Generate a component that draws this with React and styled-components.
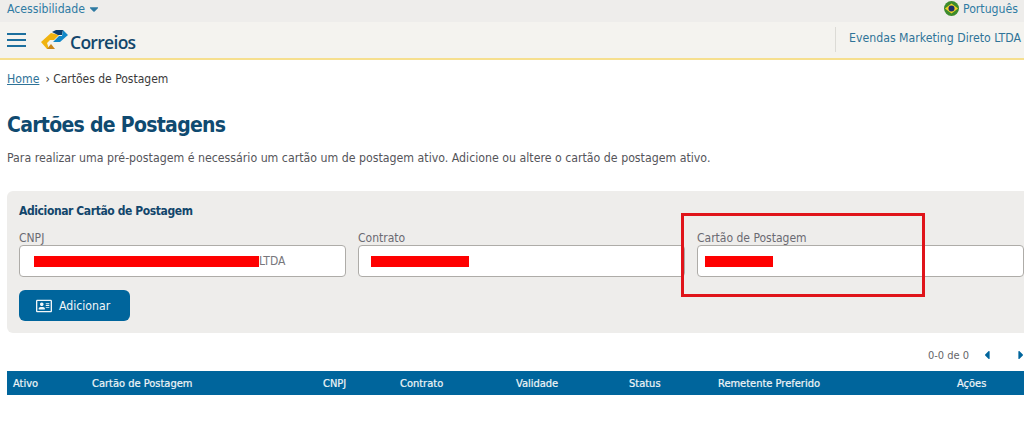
import React from "react";
import styled, { createGlobalStyle } from "styled-components";
import { FaCaretDown, FaCaretLeft, FaCaretRight, FaRegAddressCard } from "react-icons/fa";

const GlobalStyle = createGlobalStyle`
  html, body {
    margin: 0;
    padding: 0;
    background: #fff;
    overflow: hidden;
  }
  body {
    font-family: "DejaVu Sans", Verdana, sans-serif;
    font-stretch: condensed;
    color: #3a3a3a;
  }
`;

const Page = styled.div`
  position: relative;
  width: 1024px;
  height: 431px;
  overflow: hidden;
`;

const TopBar = styled.div`
  height: 22px;
  background: #eeedeb;
  display: flex;
  align-items: center;
  justify-content: space-between;
  padding: 0 6px 5px 7px;
  box-sizing: border-box;
  font-size: 12.2px;
  color: #2f7ba3;
`;

const TopLink = styled.div`
  display: flex;
  align-items: center;
  gap: ${(p) => p.$gap}px;
`;

const NavBar = styled.div`
  height: 38px;
  box-sizing: border-box;
  background: #f4f3ef;
  border-bottom: 2px solid #f6df8e;
  display: flex;
  align-items: center;
  padding-left: 7px;
`;

const Burger = styled.div`
  width: 19px;
  display: flex;
  flex-direction: column;
  gap: 4px;
  margin-right: 14px;
  span {
    display: block;
    height: 2px;
    background: #1c6f9e;
  }
`;

const Logo = styled.div`
  display: flex;
  align-items: center;
  gap: 0;
`;

const LogoWord = styled.span`
  font-family: "Open Sans", sans-serif;
  font-stretch: normal;
  font-size: 17.5px;
  font-weight: 600;
  letter-spacing: -0.7px;
  color: #12466b;
  margin-top: 4px;
`;

const UserBox = styled.div`
  margin-left: auto;
  height: 25px;
  margin-top: -2px;
  padding: 0 3px 0 13px;
  box-sizing: border-box;
  border-left: 1px solid #dcdbd6;
  font-size: 12.2px;
  line-height: 22px;
  color: #2f7398;
`;

const Content = styled.main`
  padding: 0 0 0 7px;
`;

const Breadcrumb = styled.div`
  display: flex;
  align-items: center;
  gap: 6px;
  height: 16px;
  margin-top: 11px;
  font-size: 12px;
  a {
    color: #2f7398;
    text-decoration: underline;
    font-size: 12.2px;
  }
`;

const Title = styled.h1`
  margin: 24px 0 0;
  font-size: 21px;
  line-height: 28px;
  font-weight: 700;
  letter-spacing: -0.7px;
  color: #0f4a70;
`;

const Description = styled.p`
  margin: 11px 0 0;
  font-size: 12.25px;
  line-height: 16px;
  color: #55555a;
`;

const Card = styled.section`
  margin-top: 25px;
  width: 1040px;
  height: 142px;
  box-sizing: border-box;
  padding: 12px 12px;
  border-radius: 6px;
  background: #eeedeb;
`;

const CardTitle = styled.h2`
  margin: 0;
  font-size: 12px;
  line-height: 16px;
  font-weight: 700;
  letter-spacing: -0.4px;
  color: #12466b;
`;

const Fields = styled.div`
  display: grid;
  grid-template-columns: repeat(3, 327px);
  column-gap: 12px;
  margin-top: 12px;
`;

const Label = styled.label`
  display: block;
  font-size: 12px;
  line-height: 14px;
  color: #6a6a72;
`;

const Input = styled.div`
  height: 32px;
  box-sizing: border-box;
  display: flex;
  align-items: center;
  padding: 0 0 0 ${(p) => p.$pad}px;
  border: 1px solid #aeaca8;
  border-radius: 4px;
  background: #fff;
  font-size: 12px;
  color: #77777c;
`;

const Redacted = styled.span`
  display: block;
  width: ${(p) => p.$w}px;
  height: 11px;
  background: #fe0000;
`;

const AddButton = styled.button`
  display: flex;
  align-items: center;
  gap: 7px;
  margin-top: 13px;
  width: 111px;
  height: 31px;
  padding: 0 0 0 17px;
  border: none;
  border-radius: 6px;
  background: #00659c;
  color: #f2f6f8;
  font-family: inherit;
  font-stretch: condensed;
  font-size: 12.2px;
`;

const Pager = styled.div`
  display: flex;
  align-items: center;
  justify-content: flex-end;
  height: 16px;
  margin-top: 14px;
  font-size: 11px;
  color: #66666a;
  span {
    margin-right: 11px;
  }
  svg {
    color: #00659c;
    flex: none;
  }
`;

const Arrows = styled.div`
  display: flex;
  gap: 20px;
  width: 44px;
  flex: none;
`;

const TableHead = styled.div`
  display: grid;
  grid-template-columns: 79px 231px 77px 116px 113px 89px 239px auto;
  align-items: center;
  height: 24px;
  margin-top: 8px;
  padding-left: 6px;
  background: #00659c;
  color: #f0f5f8;
  font-size: 11px;
  -webkit-text-stroke: 0.2px #f0f5f8;
`;

const AnnotationBox = styled.div`
  position: absolute;
  left: 681px;
  top: 213px;
  width: 244px;
  height: 84px;
  box-sizing: border-box;
  border: 3px solid #e0141a;
`;

const CorreiosMark = () => (
  <svg width="30" height="22" viewBox="0 0 30 22">
    <path d="M1 13 L11 4 L19 6 L14 11 H10 L7 14 L9 20 H7 Z" fill="#f0b310" />
    <path d="M7 20 L11 15 L15 20 Z" fill="#c9851a" />
    <path d="M12 3 L16 1 H23 L22 6 H18 Z" fill="#0d3f6e" />
    <path d="M23 1 L28 6 L20 13 H13 L19 7 H22 Z" fill="#1288c9" />
  </svg>
);

const BrazilFlag = () => (
  <svg width="15" height="15" viewBox="0 0 15 15">
    <circle cx="7.5" cy="7.5" r="7.5" fill="#3d8b2c" />
    <path d="M1 7.5 L7.5 2.5 L14 7.5 L7.5 12.5 Z" fill="#f5d327" />
    <circle cx="7.5" cy="7.5" r="3" fill="#1d2d6b" />
  </svg>
);

const columns = ["Ativo", "Cartão de Postagem", "CNPJ", "Contrato", "Validade", "Status", "Remetente Preferido", "Ações"];

const App = () => (
  <Page>
    <GlobalStyle />
    <TopBar>
      <TopLink $gap={2}>
        Acessibilidade <FaCaretDown size={14} />
      </TopLink>
      <TopLink $gap={4}>
        <BrazilFlag /> Português
      </TopLink>
    </TopBar>
    <NavBar>
      <Burger>
        <span />
        <span />
        <span />
      </Burger>
      <Logo>
        <CorreiosMark />
        <LogoWord>Correios</LogoWord>
      </Logo>
      <UserBox>Evendas Marketing Direto LTDA</UserBox>
    </NavBar>
    <Content>
      <Breadcrumb>
        <a href="#home">Home</a> › Cartões de Postagem
      </Breadcrumb>
      <Title>Cartões de Postagens</Title>
      <Description>
        Para realizar uma pré-postagem é necessário um cartão um de postagem ativo. Adicione ou altere o cartão de postagem ativo.
      </Description>
      <Card>
        <CardTitle>Adicionar Cartão de Postagem</CardTitle>
        <Fields>
          <div>
            <Label>CNPJ</Label>
            <Input $pad={14}>
              <Redacted $w={225} />
              LTDA
            </Input>
          </div>
          <div>
            <Label>Contrato</Label>
            <Input $pad={12}>
              <Redacted $w={98} />
            </Input>
          </div>
          <div>
            <Label>Cartão de Postagem</Label>
            <Input $pad={7}>
              <Redacted $w={68} />
            </Input>
          </div>
        </Fields>
        <AddButton>
          <FaRegAddressCard size={16} /> Adicionar
        </AddButton>
      </Card>
      <Pager>
        <span>0-0 de 0</span>
        <Arrows>
          <FaCaretLeft size={14} />
          <FaCaretRight size={14} />
        </Arrows>
      </Pager>
      <TableHead>
        {columns.map((c) => (
          <div key={c}>{c}</div>
        ))}
      </TableHead>
    </Content>
    <AnnotationBox />
  </Page>
);

export default App;
